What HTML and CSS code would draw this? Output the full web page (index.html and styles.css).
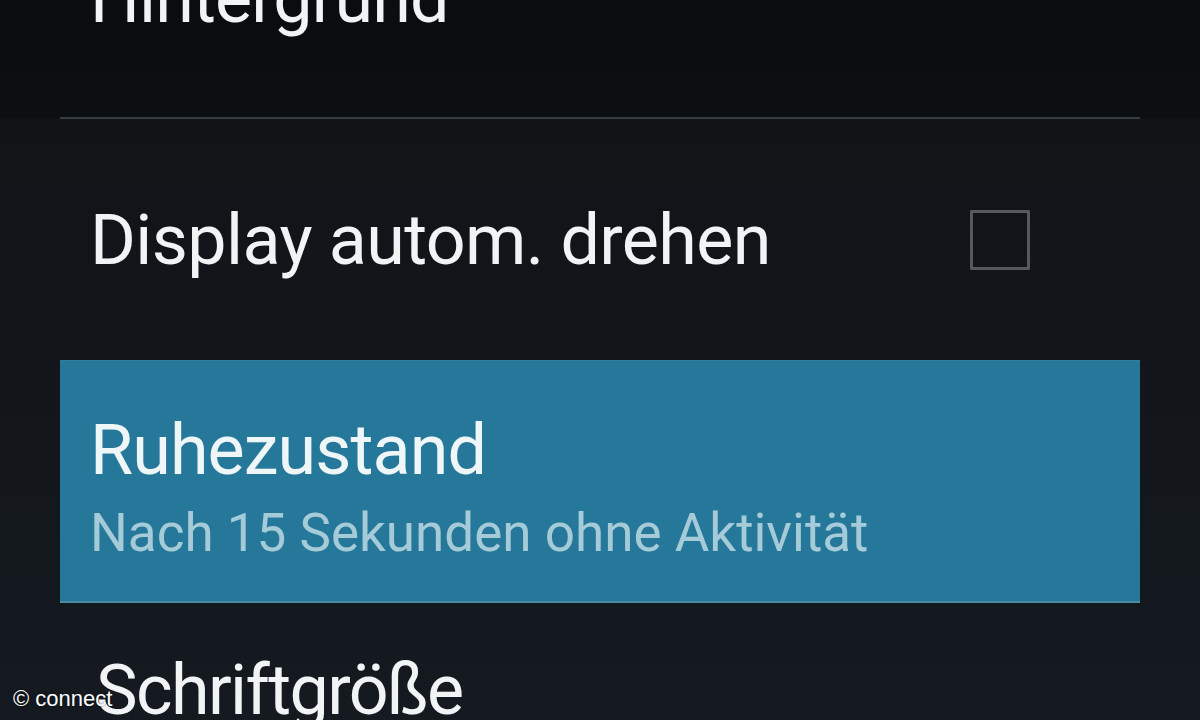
FILE: index.html
```html
<!DOCTYPE html>
<html lang="de">
<head>
<meta charset="utf-8">
<title>Einstellungen – Display</title>
<link rel="stylesheet" href="styles.css">
</head>
<body>
<div class="screen">
  <div class="list">
    <div class="row row-top">
      <span class="title title-top">Hintergrund</span>
    </div>
    <div class="divider"></div>
    <div class="row row-check">
      <span class="title title-check">Display autom. drehen</span>
      <span class="checkbox"></span>
    </div>
    <div class="row row-selected">
      <span class="title title-tight">Ruhezustand</span>
      <span class="summary">Nach 15 Sekunden ohne Aktivität</span>
    </div>
    <div class="row row-bottom">
      <span class="title title-bottom">Schriftgröße</span>
    </div>
  </div>
  <div class="watermark">© connect</div>
</div>
</body>
</html>
```
FILE: styles.css
```css
html, body {
  margin: 0;
  padding: 0;
}
body {
  width: 1200px;
  height: 720px;
  overflow: hidden;
  background: linear-gradient(to bottom, #0a0d10 0, #0c0f12 117px, #111417 119px, #12161a 400px, #141a20 720px);
  font-family: Roboto, "Noto Sans", "DejaVu Sans", sans-serif;
}
.screen {
  position: relative;
  width: 1200px;
  height: 720px;
  overflow: hidden;
}
.list {
  margin: -37px 60px 0 60px;
  display: flex;
  flex-direction: column;
}
.row {
  display: flex;
  padding-left: 30px;
}
.title {
  font-size: 70px;
  line-height: 70px;
  color: #f1f3f4;
  white-space: nowrap;
}
.title-top {
  letter-spacing: -0.9px;
}
.title-check {
  letter-spacing: -0.6px;
}
.row-top {
  padding-bottom: 84px;
}
.divider {
  height: 2px;
  background: #363b40;
}
.row-check {
  height: 241px;
  align-items: center;
  justify-content: space-between;
  padding-right: 110px;
}
.checkbox {
  width: 54px;
  height: 54px;
  border: 3px solid #55595d;
  border-radius: 1px;
}
.row-selected {
  flex-direction: column;
  height: 243px;
  box-sizing: border-box;
  padding-top: 54px;
  background: #25789a;
  border-top: 1px solid #2f7f9c;
  border-bottom: 2px solid #4a8aa2;
}
.title-tight {
  letter-spacing: -0.9px;
  color: #eef6f8;
}
.summary {
  margin-top: 22px;
  font-size: 53px;
  line-height: 52px;
  color: #a6cbd8;
  white-space: nowrap;
}
.row-bottom {
  padding-top: 52px;
  padding-left: 36px;
}
.title-bottom {
  letter-spacing: -1.6px;
}
.watermark {
  position: absolute;
  left: 13px;
  top: 688px;
  font-family: "Liberation Sans", Arial, sans-serif;
  font-size: 22px;
  line-height: 22px;
  color: #ffffff;
  text-shadow: 0 0 2px rgba(0,0,0,0.6);
}
```
